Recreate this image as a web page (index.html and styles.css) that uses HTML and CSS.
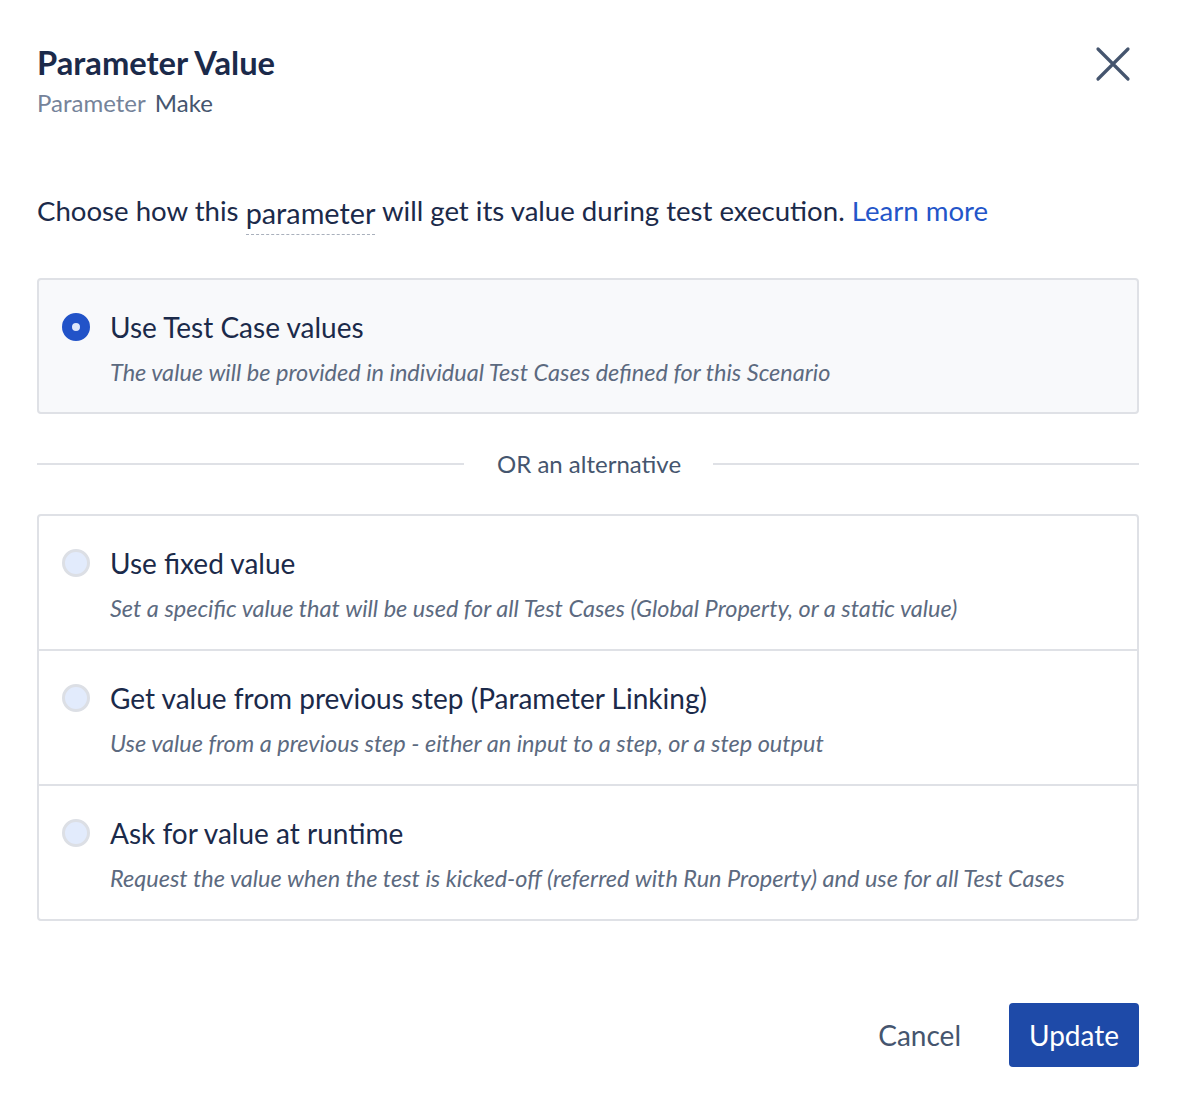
FILE: index.html
```html
<!DOCTYPE html>
<html lang="en">
<head>
    <meta charset="UTF-8">
    <meta name="viewport" content="width=device-width, initial-scale=1.0">
    <title>Parameter Value</title>
    <link rel="stylesheet" href="styles.css">
</head>
<body>
    <div id="dialog">
        <div class="dialog-header">
            <div>
                <h1 class="dialog-title">Parameter Value</h1>
                <div class="dialog-subtitle"><span class="muted">Parameter</span> Make</div>
            </div>
            <button class="close-btn" aria-label="Close">
                <svg width="36" height="36" viewBox="0 0 36 36">
                    <path d="M3 3 L33 33 M33 3 L3 33" stroke="#45556e" stroke-width="3.2" stroke-linecap="round" fill="none"/>
                </svg>
            </button>
        </div>

        <p class="intro">Choose how this <span class="term">parameter</span> will get its value during test execution. <a href="#" class="link">Learn more</a></p>

        <div class="option-card selected">
            <span class="radio checked"></span>
            <div class="option-text">
                <div class="option-title">Use Test Case values</div>
                <div class="option-desc">The value will be provided in individual Test Cases defined for this Scenario</div>
            </div>
        </div>

        <div class="divider"><span>OR an alternative</span></div>

        <div class="option-group">
            <div class="option-row">
                <span class="radio"></span>
                <div class="option-text">
                    <div class="option-title">Use fixed value</div>
                    <div class="option-desc">Set a specific value that will be used for all Test Cases (Global Property, or a static value)</div>
                </div>
            </div>
            <div class="option-row">
                <span class="radio"></span>
                <div class="option-text">
                    <div class="option-title">Get value from previous step (Parameter Linking)</div>
                    <div class="option-desc">Use value from a previous step - either an input to a step, or a step output</div>
                </div>
            </div>
            <div class="option-row">
                <span class="radio"></span>
                <div class="option-text">
                    <div class="option-title">Ask for value at runtime</div>
                    <div class="option-desc">Request the value when the test is kicked-off (referred with Run Property) and use for all Test Cases</div>
                </div>
            </div>
        </div>

        <div class="dialog-footer">
            <button class="btn-cancel">Cancel</button>
            <button class="btn-primary">Update</button>
        </div>
    </div>
</body>
</html>
```

FILE: styles.css
```css
body {
    font-family: Lato, "Open Sans", sans-serif;
    background-color: #fff;
    margin: 0;
    padding: 0;
    color: #1b2a4a;
}

#dialog {
    width: 1102px;
    margin-left: 37px;
    padding-top: 45px;
}

.dialog-header {
    display: flex;
    justify-content: space-between;
    align-items: flex-start;
}

.dialog-title {
    margin: 0;
    font-size: 32.7px;
    line-height: 36px;
    font-weight: 700;
    color: #1b2a4a;
}

.dialog-subtitle {
    margin-top: 8px;
    font-size: 24px;
    line-height: 28px;
    color: #45556e;
}

.muted {
    color: #75839a;
    margin-right: 3px;
}

.close-btn {
    background: none;
    border: none;
    padding: 0;
    margin-top: 1px;
    margin-right: 8px;
    width: 36px;
    height: 38px;
    cursor: pointer;
}

.intro {
    margin: 76px 0 0;
    font-size: 27.6px;
    line-height: 36px;
    color: #1b2a4a;
}

.term {
    font-size: 28.8px;
    line-height: 28px;
    vertical-align: -3px;
    padding-bottom: 4px;
    border-bottom: 1.5px dashed #a9b0bc;
}

.link {
    color: #2355c9;
    text-decoration: none;
}

.option-card {
    margin-top: 49px;
    display: flex;
    align-items: flex-start;
    gap: 20px;
    padding: 30px 24px 25px 23px;
    background-color: #f8f9fb;
    border: 2px solid #dfe1e6;
    border-radius: 4px;
}

.option-group {
    border: 2px solid #dfe1e6;
    border-radius: 4px;
}

.option-row {
    display: flex;
    align-items: flex-start;
    gap: 20px;
    padding: 30px 24px 23px 23px;
    height: 80px;
}

.option-row + .option-row {
    border-top: 2px solid #dfe1e6;
}

.radio {
    flex: none;
    width: 28px;
    height: 28px;
    margin-top: 3px;
    box-sizing: border-box;
    border-radius: 50%;
    border: 3px solid #dcdfe5;
    background-color: #e2ebfc;
}

.radio.checked {
    border: 10px solid #2253c8;
    background-color: #dfe8fb;
}

.option-title {
    font-size: 28px;
    line-height: 34px;
    color: #1b2a4a;
}

.option-desc {
    margin-top: 13px;
    font-size: 23.5px;
    line-height: 30px;
    font-style: italic;
    color: #5c6a80;
}

.divider {
    display: flex;
    align-items: center;
    margin: 35px 0;
    font-size: 24px;
    line-height: 30px;
    color: #45556e;
}

.divider::before,
.divider::after {
    content: "";
    height: 2px;
    background-color: #dfe1e6;
}

.divider::before {
    width: 427px;
    margin-right: 33px;
}

.divider::after {
    flex: 1;
    margin-left: 32px;
}

.dialog-footer {
    display: flex;
    justify-content: flex-end;
    align-items: center;
    gap: 48px;
    margin-top: 82px;
}

.btn-cancel {
    background: none;
    border: none;
    padding: 0;
    font-family: inherit;
    font-size: 28px;
    color: #45556e;
    cursor: pointer;
}

.btn-primary {
    background-color: #1e4aa8;
    color: #fff;
    border: none;
    border-radius: 4px;
    width: 130px;
    height: 64px;
    font-family: inherit;
    font-size: 28px;
    cursor: pointer;
}
```
